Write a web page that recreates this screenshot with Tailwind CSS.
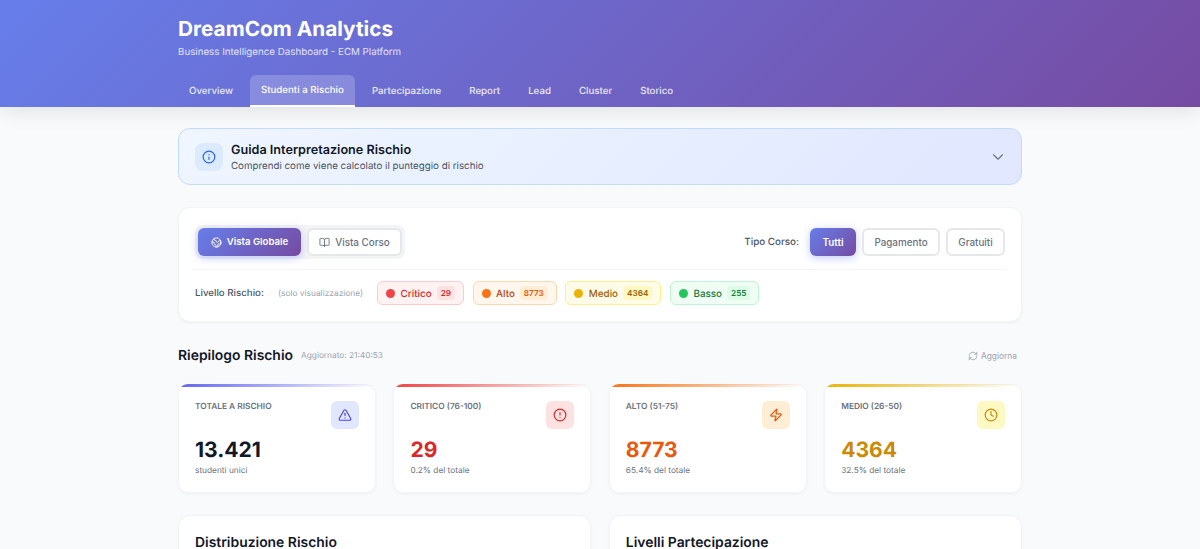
<!DOCTYPE html>
<html lang="en" class="h-[549px] overflow-hidden">
<head>
    <meta charset="UTF-8" />
    <title>DreamCom Analytics</title>
    <script src="https://cdn.jsdelivr.net/npm/@tailwindcss/browser@4"></script>
</head>
<body class="h-[549px] overflow-hidden bg-[#f9fafb] font-['Inter',sans-serif] text-[#111827] [text-rendering:geometricPrecision]">
    <!-- Header with nav tabs -->
    <header class="h-[107px] bg-[linear-gradient(135deg,#667eea_0%,#764ba2_100%)] shadow-[0_4px_20px_rgba(0,0,0,0.1)]">
        <div class="mx-auto w-[844px]">
            <h1 class="pt-[15px] text-[20.8px] leading-[29px] font-bold text-white">DreamCom Analytics</h1>
            <p class="mt-[1px] text-[9.75px] leading-[15px] text-white/80">Business Intelligence Dashboard - ECM Platform</p>
            <nav class="mt-[15px] flex h-[32px] text-[9.7px] leading-[15px] font-medium text-white/85">
                <a class="flex items-center px-[11px]">Overview</a>
                <a class="ml-[6px] flex items-center rounded-t-[6px] border-b-2 border-white bg-white/20 px-[11px] text-white">Studenti a Rischio</a>
                <a class="ml-[6px] flex items-center px-[11px]">Partecipazione</a>
                <a class="ml-[6px] flex items-center px-[11px]">Report</a>
                <a class="ml-[6px] flex items-center px-[11px]">Lead</a>
                <a class="ml-[6px] flex items-center px-[11px]">Cluster</a>
                <a class="ml-[6px] flex items-center px-[11px]">Storico</a>
            </nav>
        </div>
    </header>

    <main class="mx-auto w-[844px] pt-[21px]">
        <!-- Risk guide banner -->
        <section class="flex h-[57px] items-center rounded-[12px] border border-[#bfdbfe] bg-[linear-gradient(135deg,#eff6ff,#e0e7ff)] pr-[14px] pl-[16px]">
            <div class="flex h-[28px] w-[28px] items-center justify-center rounded-[8px] bg-[#dbeafe]">
                <svg class="h-[14px] w-[14px]" viewBox="0 0 24 24" fill="none" stroke="#2563eb" stroke-width="2" stroke-linecap="round" stroke-linejoin="round"><circle cx="12" cy="12" r="10"/><path d="M12 16v-4"/><path d="M12 8h.01"/></svg>
            </div>
            <div class="ml-[8px] flex-1 pt-[3px]">
                <h2 class="text-[12.65px] leading-[17px] font-semibold text-[#111827]">Guida Interpretazione Rischio</h2>
                <p class="mt-[1px] text-[9.75px] leading-[14px] text-[#4b5563]">Comprendi come viene calcolato il punteggio di rischio</p>
            </div>
            <svg class="h-[18px] w-[18px]" viewBox="0 0 24 24" fill="none" stroke="#6b7280" stroke-width="1.5" stroke-linecap="round" stroke-linejoin="round"><path d="m6 9 6 6 6-6"/></svg>
        </section>

        <!-- Filters -->
        <section class="mt-[22px] h-[115px] rounded-[12px] border border-[#f3f4f6] bg-white px-[16px] pt-[17px] shadow-[0_1px_3px_rgba(0,0,0,0.05)]">
            <div class="flex h-[45px] items-start justify-between border-b border-[#f3f4f6]">
                <div class="flex h-[34px] items-center gap-[6px] rounded-[8px] bg-[#f3f4f6] px-[3px]">
                    <button class="flex h-[28px] w-[103px] items-center justify-center gap-[5px] rounded-[6px] bg-[linear-gradient(135deg,#667eea,#764ba2)] text-[9.6px] font-semibold text-white shadow-[0_2px_8px_rgba(102,126,234,0.4)]">
                        <svg class="h-[11px] w-[11px]" viewBox="0 0 24 24" fill="none" stroke="currentColor" stroke-width="2" stroke-linecap="round" stroke-linejoin="round"><path d="M21.54 15H17a2 2 0 0 0-2 2v4.54"/><path d="M7 3.34V5a3 3 0 0 0 3 3a2 2 0 0 1 2 2c0 1.1.9 2 2 2a2 2 0 0 0 2-2c0-1.1.9-2 2-2h3.17"/><path d="M11 21.95V18a2 2 0 0 0-2-2a2 2 0 0 1-2-2v-1a2 2 0 0 0-2-2H2.05"/><circle cx="12" cy="12" r="10"/></svg>
                        Vista Globale
                    </button>
                    <button class="flex h-[28px] w-[95px] items-center justify-center gap-[5px] rounded-[6px] border-2 border-[#e5e7eb] bg-white text-[9.85px] font-medium text-[#6b7280]">
                        <svg class="h-[11px] w-[11px]" viewBox="0 0 24 24" fill="none" stroke="currentColor" stroke-width="2" stroke-linecap="round" stroke-linejoin="round"><path d="M12 7v14"/><path d="M3 18a1 1 0 0 1-1-1V4a1 1 0 0 1 1-1h5a4 4 0 0 1 4 4 4 4 0 0 1 4-4h5a1 1 0 0 1 1 1v13a1 1 0 0 1-1 1h-6a3 3 0 0 0-3 3 3 3 0 0 0-3-3z"/></svg>
                        Vista Corso
                    </button>
                </div>
                <div class="flex h-[28px] translate-y-[3px] items-center text-[9.85px]">
                    <span class="mr-[11px] font-medium text-[#4b5563]">Tipo Corso:</span>
                    <button class="h-[28px] w-[46px] rounded-[6px] bg-[linear-gradient(135deg,#667eea,#764ba2)] font-semibold text-white shadow-[0_2px_8px_rgba(102,126,234,0.4)]">Tutti</button>
                    <button class="ml-[6px] h-[28px] w-[78px] rounded-[6px] border-2 border-[#e5e7eb] bg-white font-medium text-[#6b7280]">Pagamento</button>
                    <button class="ml-[6px] h-[28px] w-[59px] rounded-[6px] border-2 border-[#e5e7eb] bg-white font-medium text-[#6b7280]">Gratuiti</button>
                </div>
            </div>
            <div class="mt-[11px] flex h-[24px] items-center">
                <span class="pt-[2px] text-[9.7px] font-medium text-[#4b5563]">Livello Rischio:</span>
                <span class="ml-[14px] pt-[2px] text-[8.4px] text-[#9ca3af]">(solo visualizzazione)</span>
                <div class="ml-[14px] flex h-[24px] items-center rounded-[6px] border border-[#fecaca] bg-[#fef2f2] px-[8px] text-[9.85px] font-medium text-[#dc2626]">
                    <i class="h-[9px] w-[9px] rounded-full bg-[#ef4444]"></i>
                    <span class="ml-[5.5px] pt-[2px]">Critico</span>
                    <b class="ml-[5px] rounded-[4px] bg-[#fee2e2] px-[4px] py-[1px] text-[8.2px] font-semibold">29</b>
                </div>
                <div class="ml-[8.5px] flex h-[24px] items-center rounded-[6px] border border-[#fed7aa] bg-[#fff7ed] px-[8px] text-[9.85px] font-medium text-[#c2410c]">
                    <i class="h-[9px] w-[9px] rounded-full bg-[#f97316]"></i>
                    <span class="ml-[5.5px] pt-[2px]">Alto</span>
                    <b class="ml-[5px] rounded-[4px] bg-[#ffedd5] px-[4px] py-[1px] text-[8.2px] font-semibold text-[#ea580c]">8773</b>
                </div>
                <div class="ml-[8.5px] flex h-[24px] items-center rounded-[6px] border border-[#fef08a] bg-[#fefce8] px-[8px] text-[9.85px] font-medium text-[#a16207]">
                    <i class="h-[9px] w-[9px] rounded-full bg-[#eab308]"></i>
                    <span class="ml-[5.5px] pt-[2px]">Medio</span>
                    <b class="ml-[5px] rounded-[4px] bg-[#fef9c3] px-[4px] py-[1px] text-[8.2px] font-semibold">4364</b>
                </div>
                <div class="ml-[8.5px] flex h-[24px] items-center rounded-[6px] border border-[#bbf7d0] bg-[#f0fdf4] px-[8px] text-[9.85px] font-medium text-[#15803d]">
                    <i class="h-[9px] w-[9px] rounded-full bg-[#22c55e]"></i>
                    <span class="ml-[5.5px] pt-[2px]">Basso</span>
                    <b class="ml-[5px] rounded-[4px] bg-[#dcfce7] px-[4px] py-[1px] text-[8.2px] font-semibold">255</b>
                </div>
            </div>
        </section>

        <!-- Summary heading -->
        <div class="mt-[24px] flex h-[21px] items-center">
            <h2 class="text-[13.9px] font-semibold text-[#111827]">Riepilogo Rischio</h2>
            <span class="ml-[8px] text-[8.3px] text-[#9ca3af]">Aggiornato: 21:40:53</span>
            <button class="mr-[5px] ml-auto flex items-center gap-[3px] text-[8.4px] text-[#9ca3af]">
                <svg class="h-[10px] w-[10px]" viewBox="0 0 24 24" fill="none" stroke="currentColor" stroke-width="2" stroke-linecap="round" stroke-linejoin="round"><path d="M3 12a9 9 0 0 1 9-9 9.75 9.75 0 0 1 6.74 2.74L21 8"/><path d="M21 3v5h-5"/><path d="M21 12a9 9 0 0 1-9 9 9.75 9.75 0 0 1-6.74-2.74L3 16"/><path d="M8 16H3v5"/></svg>
                Aggiorna
            </button>
        </div>

        <!-- Stat cards -->
        <div class="mt-[17px] grid grid-cols-4 gap-[17.6px]">
            <div class="relative h-[109px] overflow-hidden rounded-[10px] bg-white px-[17px] pt-[17px] shadow-[inset_0_0_0_1px_#f3f4f6,0_1px_3px_rgba(0,0,0,0.05)]">
                <div class="absolute top-0 right-0 left-0 h-[3px] bg-[linear-gradient(90deg,#6366f1,transparent)]"></div>
                <div class="flex justify-between">
                    <span class="text-[8.36px] leading-[12px] font-semibold text-[#6b7280]">TOTALE A RISCHIO</span>
                    <div class="flex h-[28px] w-[28px] items-center justify-center rounded-[6px] bg-[#e0e7ff]">
                        <svg class="h-[14px] w-[14px]" viewBox="0 0 24 24" fill="none" stroke="#4f46e5" stroke-width="2" stroke-linecap="round" stroke-linejoin="round"><path d="m21.73 18-8-14a2 2 0 0 0-3.48 0l-8 14A2 2 0 0 0 4 21h16a2 2 0 0 0 1.73-3"/><path d="M12 9v4"/><path d="M12 17h.01"/></svg>
                    </div>
                </div>
                <div class="mt-[8px] text-[21.1px] leading-[28px] font-bold text-[#111827]">13.421</div>
                <div class="text-[8.3px] leading-[12px] text-[#6b7280]">studenti unici</div>
            </div>
            <div class="relative h-[109px] overflow-hidden rounded-[10px] bg-white px-[17px] pt-[17px] shadow-[inset_0_0_0_1px_#f3f4f6,0_1px_3px_rgba(0,0,0,0.05)]">
                <div class="absolute top-0 right-0 left-0 h-[3px] bg-[linear-gradient(90deg,#ef4444,transparent)]"></div>
                <div class="flex justify-between">
                    <span class="text-[8.36px] leading-[12px] font-semibold text-[#6b7280]">CRITICO (76-100)</span>
                    <div class="flex h-[28px] w-[28px] items-center justify-center rounded-[6px] bg-[#fee2e2]">
                        <svg class="h-[14px] w-[14px]" viewBox="0 0 24 24" fill="none" stroke="#dc2626" stroke-width="2" stroke-linecap="round" stroke-linejoin="round"><circle cx="12" cy="12" r="10"/><path d="M12 8v4"/><path d="M12 16h.01"/></svg>
                    </div>
                </div>
                <div class="mt-[8px] text-[21.1px] leading-[28px] font-bold text-[#dc2626]">29</div>
                <div class="text-[8.3px] leading-[12px] text-[#6b7280]">0.2% del totale</div>
            </div>
            <div class="relative h-[109px] overflow-hidden rounded-[10px] bg-white px-[17px] pt-[17px] shadow-[inset_0_0_0_1px_#f3f4f6,0_1px_3px_rgba(0,0,0,0.05)]">
                <div class="absolute top-0 right-0 left-0 h-[3px] bg-[linear-gradient(90deg,#f97316,transparent)]"></div>
                <div class="flex justify-between">
                    <span class="text-[8.36px] leading-[12px] font-semibold text-[#6b7280]">ALTO (51-75)</span>
                    <div class="flex h-[28px] w-[28px] items-center justify-center rounded-[6px] bg-[#ffedd5]">
                        <svg class="h-[14px] w-[14px]" viewBox="0 0 24 24" fill="none" stroke="#ea580c" stroke-width="2" stroke-linecap="round" stroke-linejoin="round"><path d="M4 14a1 1 0 0 1-.78-1.63l9.9-10.2a.5.5 0 0 1 .86.46l-1.92 6.02A1 1 0 0 0 13 10h7a1 1 0 0 1 .78 1.63l-9.9 10.2a.5.5 0 0 1-.86-.46l1.92-6.02A1 1 0 0 0 11 14z"/></svg>
                    </div>
                </div>
                <div class="mt-[8px] text-[21.1px] leading-[28px] font-bold text-[#ea580c]">8773</div>
                <div class="text-[8.3px] leading-[12px] text-[#6b7280]">65.4% del totale</div>
            </div>
            <div class="relative h-[109px] overflow-hidden rounded-[10px] bg-white px-[17px] pt-[17px] shadow-[inset_0_0_0_1px_#f3f4f6,0_1px_3px_rgba(0,0,0,0.05)]">
                <div class="absolute top-0 right-0 left-0 h-[3px] bg-[linear-gradient(90deg,#eab308,transparent)]"></div>
                <div class="flex justify-between">
                    <span class="text-[8.36px] leading-[12px] font-semibold text-[#6b7280]">MEDIO (26-50)</span>
                    <div class="flex h-[28px] w-[28px] items-center justify-center rounded-[6px] bg-[#fef9c3]">
                        <svg class="h-[14px] w-[14px]" viewBox="0 0 24 24" fill="none" stroke="#ca8a04" stroke-width="2" stroke-linecap="round" stroke-linejoin="round"><circle cx="12" cy="12" r="10"/><path d="M12 6v6l4 2"/></svg>
                    </div>
                </div>
                <div class="mt-[8px] text-[21.1px] leading-[28px] font-bold text-[#ca8a04]">4364</div>
                <div class="text-[8.3px] leading-[12px] text-[#6b7280]">32.5% del totale</div>
            </div>
        </div>

        <!-- Charts row, cut by the window -->
        <div class="mt-[22px] grid grid-cols-2 gap-[17.6px]">
            <div class="h-[34px] rounded-t-[12px] border border-b-0 border-[#f3f4f6] bg-white px-[16px] pt-[22px] shadow-[0_1px_3px_rgba(0,0,0,0.05)]">
                <h3 class="text-[13.9px] leading-[10px] font-semibold text-[#111827]">Distribuzione Rischio</h3>
            </div>
            <div class="h-[34px] rounded-t-[12px] border border-b-0 border-[#f3f4f6] bg-white px-[16px] pt-[22px] shadow-[0_1px_3px_rgba(0,0,0,0.05)]">
                <h3 class="text-[13.9px] leading-[10px] font-semibold text-[#111827]">Livelli Partecipazione</h3>
            </div>
        </div>
    </main>
</body>
</html>
